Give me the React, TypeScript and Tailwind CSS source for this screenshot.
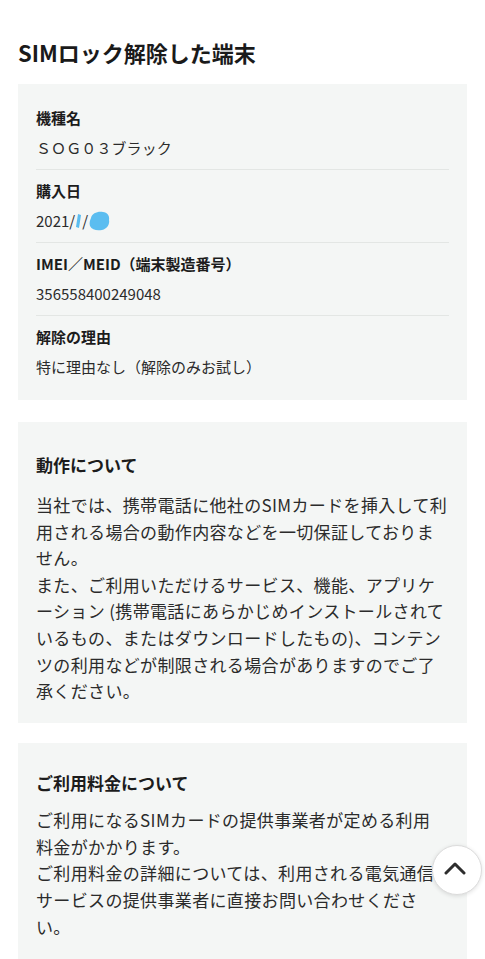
import React from "react";

const font = { fontFamily: '"Noto Sans CJK JP", "Noto Sans", sans-serif' };

function Row({
  label,
  children,
  last,
}: {
  label: string;
  children: React.ReactNode;
  last?: boolean;
}) {
  return (
    <div className={last ? "pt-[10px]" : "pt-[10px] pb-[10px] border-b border-[#e3e6e4]"}>
      <div className="text-[15px] leading-[22px] font-bold text-[#1c1c1c]">{label}</div>
      <div className="mt-[8px] text-[15px] leading-[22px] text-[#2b2b2b]">{children}</div>
    </div>
  );
}

export default function App() {
  return (
    <div className="relative min-h-[959px] bg-white px-[18px] pt-[37px] overflow-hidden" style={font}>
      <h1 className="text-[22px] leading-[30px] font-bold text-[#1a1a1a]">SIMロック解除した端末</h1>

      <div className="mt-[17px] bg-[#f4f6f5] px-[18px] pt-[13px] pb-[22px]">
        <Row label="機種名">
          <span className="tracking-[0.1px]">ＳＯＧ０３ブラック</span>
        </Row>
        <Row label="購入日">
          <span className="inline-flex items-center">
            2021/
            <svg width="7" height="16" viewBox="0 0 7 16">
              <path d="M3 1 L6 2 L4 15 L1 14 Z" fill="#5bbdf0" />
            </svg>
            /
            <svg width="23" height="22" viewBox="0 0 23 22">
              <path
                d="M3 8 C4 3 10 1 15 2 C19 2 22 6 21 10 C22 14 19 19 14 20 C9 21 4 20 2 16 C1 13 2 10 3 8 Z"
                fill="#5bbdf0"
              />
            </svg>
          </span>
        </Row>
        <Row label="IMEI／MEID（端末製造番号）">356558400249048</Row>
        <Row label="解除の理由" last>
          特に理由なし（解除のみお試し）
        </Row>
      </div>

      <div className="mt-[22px] bg-[#f4f6f5] px-[18px] pt-[30px] pb-[18px]">
        <h2 className="text-[17px] leading-[26px] font-bold text-[#1c1c1c]">動作について</h2>
        <p className="mt-[14px] text-[17px] leading-[26.6px] tracking-[0.35px] text-[#2b2b2b] whitespace-nowrap">
          当社では、携帯電話に他社のSIMカードを挿入して利
          <br />
          用される場合の動作内容などを一切保証しておりま
          <br />
          せん。
          <br />
          また、ご利用いただけるサービス、機能、アプリケ
          <br />
          ーション (携帯電話にあらかじめインストールされて
          <br />
          いるもの、またはダウンロードしたもの)、コンテン
          <br />
          ツの利用などが制限される場合がありますのでご了
          <br />
          承ください。
        </p>
      </div>

      <div className="mt-[20px] bg-[#f4f6f5] px-[18px] pt-[27px] pb-[20px]">
        <h2 className="text-[17px] leading-[26px] font-bold text-[#1c1c1c]">ご利用料金について</h2>
        <p className="mt-[11px] text-[17px] leading-[26.8px] tracking-[0.35px] text-[#2b2b2b] whitespace-nowrap overflow-hidden">
          ご利用になるSIMカードの提供事業者が定める利用
          <br />
          料金がかかります。
          <br />
          ご利用料金の詳細については、利用される電気通信
          <br />
          サービスの提供事業者に直接お問い合わせくださ
          <br />
          い。
        </p>
      </div>

      <button className="absolute left-[432px] top-[845px] w-[50px] h-[50px] rounded-full bg-white border border-[#dcdcdc] shadow-[0_1px_4px_rgba(0,0,0,0.12)] flex items-center justify-center">
        <svg width="22" height="14" viewBox="0 0 22 14" className="-mt-[5px] -ml-[4px]">
          <polyline
            points="2,12 11,3 20,12"
            fill="none"
            stroke="#2e2e2e"
            strokeWidth="3"
            strokeLinecap="round"
            strokeLinejoin="round"
          />
        </svg>
      </button>
    </div>
  );
}
